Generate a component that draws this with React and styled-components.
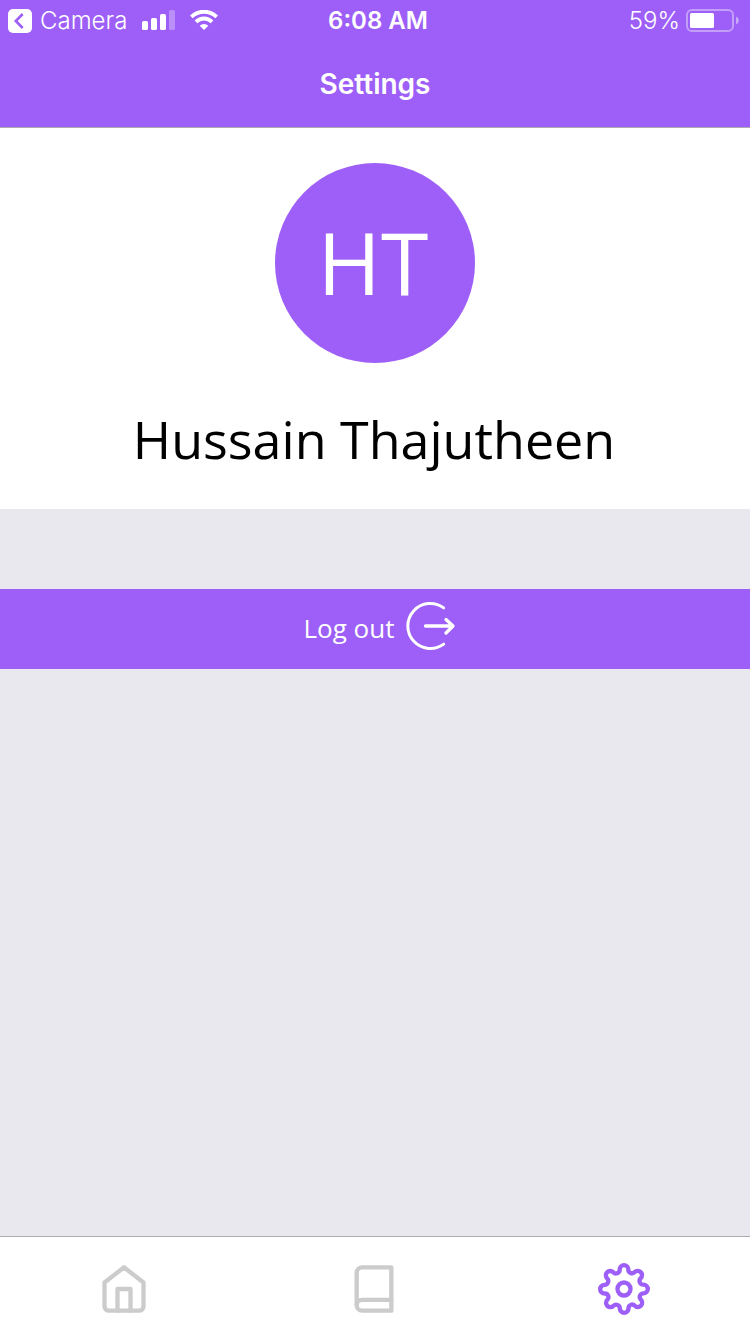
import React from "react";
import styled, { createGlobalStyle, ThemeProvider } from "styled-components";

const theme = {
  purple: "#9d5ff7",
  grey: "#e9e8ee",
  line: "#adabb0",
  muted: "#cccccc",
  system: 'Inter, "Liberation Sans", sans-serif',
  body: '"Open Sans", "Noto Sans", sans-serif',
};

const GlobalStyle = createGlobalStyle`
  *, *::before, *::after { box-sizing: border-box; }
  body { margin: 0; background: ${theme.grey}; }
`;

const Screen = styled.div`
  min-height: 100vh;
  display: flex;
  flex-direction: column;
  background: ${({ theme }) => theme.grey};
  font-family: ${({ theme }) => theme.body};
`;

const Header = styled.header`
  background: ${({ theme }) => theme.purple};
  border-bottom: 1px solid ${({ theme }) => theme.line};
  color: #fff;
  font-family: ${({ theme }) => theme.system};
`;

const StatusBar = styled.div`
  display: grid;
  grid-template-columns: 1fr auto 1fr;
  align-items: center;
  height: 42px;
  padding: 0 10px 0 8px;
  font-size: 24px;
  line-height: 42px;
`;

const StatusGroup = styled.div`
  display: flex;
  align-items: center;
  justify-content: ${({ $end }) => ($end ? "flex-end" : "flex-start")};
  gap: ${({ $end }) => ($end ? "6px" : "15px")};
  font-weight: 300;

  svg {
    display: block;
    flex: none;
    margin-bottom: ${({ $end }) => ($end ? "0" : "2px")};
  }
`;

const BackButton = styled.button`
  display: flex;
  align-items: center;
  gap: 8px;
  padding: 0;
  border: 0;
  background: none;
  color: inherit;
  font: inherit;

  && svg { margin-bottom: 0; }
`;

const Clock = styled.time`
  padding-left: 8px;
  font-weight: 600;
`;

const Title = styled.h1`
  margin: 0;
  height: 85px;
  font-size: 28px;
  line-height: 84px;
  font-weight: 600;
  text-align: center;
`;

const Profile = styled.section`
  display: flex;
  flex-direction: column;
  align-items: center;
  gap: 40px;
  padding: 35px 16px 34px;
  background: #fff;
`;

const Avatar = styled.div`
  width: 200px;
  height: 200px;
  padding-right: 4px;
  border-radius: 50%;
  background: ${({ theme }) => theme.purple};
  color: #fff;
  font-size: 86px;
  line-height: 198px;
  text-align: center;
`;

const Name = styled.h2`
  margin: 0;
  padding-right: 2px;
  color: #000;
  font-size: 52px;
  line-height: 72px;
  font-weight: 400;
  text-align: center;
`;

const Content = styled.main`
  flex: 1;
`;

const LogoutButton = styled.button`
  display: flex;
  align-items: center;
  justify-content: center;
  gap: 12px;
  width: 100%;
  height: 80px;
  margin: 80px 0;
  padding: 0 0 2px 10px;
  border: 0;
  background: ${({ theme }) => theme.purple};
  color: #fff;
  font-family: ${({ theme }) => theme.body};
  font-size: 26px;
  line-height: 36px;
  font-weight: 400;

  svg { display: block; margin-bottom: 4px; }
`;

const TabBar = styled.nav`
  display: grid;
  grid-template-columns: repeat(3, 1fr);
  height: 98px;
  padding-top: 8px;
  border-top: 1px solid ${({ theme }) => theme.line};
  background: #fff;
`;

const Tab = styled.a`
  display: flex;
  align-items: center;
  justify-content: center;
  height: 88px;
  padding-right: 2px;
  color: ${({ theme, $active }) => ($active ? theme.purple : theme.muted)};
`;

const TabSvg = styled.svg`
  width: 52px;
  height: 52px;
  fill: none;
  stroke: currentColor;
  stroke-width: 2;
  stroke-linecap: round;
  stroke-linejoin: round;
`;

const BackIcon = () => (
  <svg width="24" height="24" viewBox="0 0 24 24" aria-hidden="true">
    <rect width="24" height="24" rx="5" fill="#fff" />
    <path d="M14.700 5 7.800 12l6.900 7" fill="none" stroke={theme.purple} strokeWidth="2.600" />
  </svg>
);

const SignalIcon = () => (
  <svg width="33" height="20" viewBox="0 0 33 20" fill="#fff" aria-hidden="true">
    <rect x="0" y="11" width="6" height="9" rx="1.600" />
    <rect x="9" y="8" width="6" height="12" rx="1.600" />
    <rect x="18" y="4" width="6" height="16" rx="1.600" />
    <rect x="27" y="0" width="6" height="20" rx="1.600" opacity="0.3" />
  </svg>
);

const WifiIcon = () => (
  <svg width="28" height="20" viewBox="0 0 28 20" aria-hidden="true">
    <g fill="none" stroke="#fff" strokeWidth="3.900">
      <path d="M1.300 6.900a18.200 18.200 0 0 1 25.400 0" />
      <path d="M6 11.800a11.500 11.500 0 0 1 16 0" />
    </g>
    <path d="M14 20l-4.300-4.300a6.200 6.200 0 0 1 8.600 0z" fill="#fff" />
  </svg>
);

const BatteryIcon = () => (
  <svg width="54" height="24" viewBox="0 0 54 24" aria-hidden="true">
    <rect x="1" y="1" width="46" height="21" rx="5" fill="none" stroke="#fff" strokeWidth="2" opacity="0.4" />
    <rect x="4" y="4" width="24" height="15" rx="1.500" fill="#fff" />
    <path d="M50 7.500c1.700.7 2.800 2.200 2.800 4s-1.100 3.300-2.800 4z" fill="#fff" opacity="0.45" />
  </svg>
);

const LogoutIcon = () => (
  <svg width="50" height="50" viewBox="0 0 50 50" fill="none" stroke="#fff" strokeWidth="3" strokeLinecap="round" strokeLinejoin="round" aria-hidden="true">
    <path d="M37.700 6.900A22.500 22.500 0 1 0 37.700 43.100" />
    <path d="M19.500 25H47M40 18.500 47 25l-7 7" strokeWidth="3.300" />
  </svg>
);

const tabs = [
  {
    label: "Home",
    href: "#home",
    shape: (
      <>
        <path d="M3 9l9-7 9 7v11a2 2 0 0 1-2 2H5a2 2 0 0 1-2-2z" />
        <path d="M9 22V12h6v10" />
      </>
    ),
  },
  {
    label: "Library",
    href: "#library",
    shape: (
      <>
        <path d="M4 19.500A2.500 2.500 0 0 1 6.500 17H20" />
        <path d="M6.500 2H20v20H6.500A2.500 2.500 0 0 1 4 19.500v-15A2.500 2.500 0 0 1 6.500 2z" />
      </>
    ),
  },
  {
    label: "Settings",
    href: "#settings",
    active: true,
    shape: (
      <>
        <circle cx="12" cy="12" r="3" />
        <path d="M19.400 15a1.650 1.650 0 0 0 .33 1.820l.06.06a2 2 0 0 1 0 2.830 2 2 0 0 1-2.830 0l-.06-.06a1.650 1.650 0 0 0-1.820-.33 1.650 1.650 0 0 0-1 1.510V21a2 2 0 0 1-2 2 2 2 0 0 1-2-2v-.09A1.650 1.650 0 0 0 9 19.400a1.650 1.650 0 0 0-1.820.33l-.06.06a2 2 0 0 1-2.830 0 2 2 0 0 1 0-2.830l.06-.06a1.650 1.650 0 0 0 .33-1.820 1.650 1.650 0 0 0-1.510-1H3a2 2 0 0 1-2-2 2 2 0 0 1 2-2h.09A1.650 1.650 0 0 0 4.600 9a1.650 1.650 0 0 0-.33-1.820l-.06-.06a2 2 0 0 1 0-2.830 2 2 0 0 1 2.830 0l.06.06a1.650 1.650 0 0 0 1.820.33H9a1.650 1.650 0 0 0 1-1.510V3a2 2 0 0 1 2-2 2 2 0 0 1 2 2v.09a1.650 1.650 0 0 0 1 1.510 1.650 1.650 0 0 0 1.820-.33l.06-.06a2 2 0 0 1 2.830 0 2 2 0 0 1 0 2.830l-.06.06a1.650 1.650 0 0 0-.33 1.820V9a1.650 1.650 0 0 0 1.510 1H21a2 2 0 0 1 2 2 2 2 0 0 1-2 2h-.09a1.650 1.650 0 0 0-1.510 1z" />
      </>
    ),
  },
];

export default function App() {
  return (
    <ThemeProvider theme={theme}>
      <GlobalStyle />
      <Screen>
        <Header>
          <StatusBar>
            <StatusGroup>
              <BackButton type="button">
                <BackIcon />
                Camera
              </BackButton>
              <SignalIcon />
              <WifiIcon />
            </StatusGroup>
            <Clock>6:08 AM</Clock>
            <StatusGroup $end>
              <span>59%</span>
              <BatteryIcon />
            </StatusGroup>
          </StatusBar>
          <Title>Settings</Title>
        </Header>
        <Content>
          <Profile>
            <Avatar>HT</Avatar>
            <Name>Hussain Thajutheen</Name>
          </Profile>
          <LogoutButton type="button">
            Log out
            <LogoutIcon />
          </LogoutButton>
        </Content>
        <TabBar>
          {tabs.map(({ label, href, active, shape }) => (
            <Tab key={label} href={href} $active={active} aria-label={label} aria-current={active ? "page" : undefined}>
              <TabSvg viewBox="0 0 24 24" aria-hidden="true">{shape}</TabSvg>
            </Tab>
          ))}
        </TabBar>
      </Screen>
    </ThemeProvider>
  );
}
